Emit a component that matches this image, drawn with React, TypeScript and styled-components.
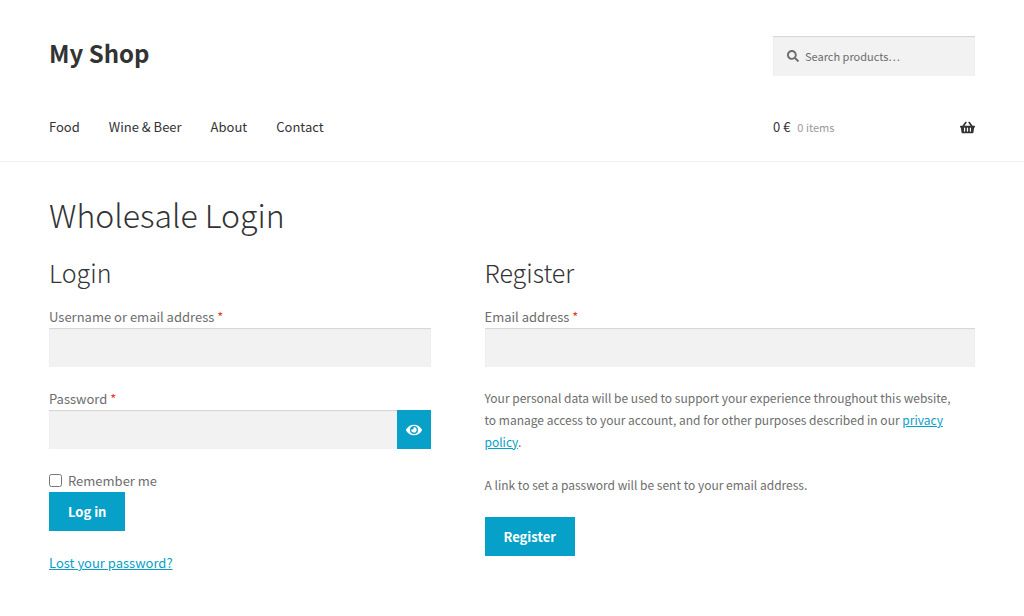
import React, { useState } from "react";
import styled, { createGlobalStyle } from "styled-components";
import { FaEye, FaSearch, FaShoppingBasket } from "react-icons/fa";

const GlobalStyle = createGlobalStyle`
  *, *::before, *::after { box-sizing: border-box; }
  body {
    margin: 0;
    background: #fff;
    color: #6d6d6d;
    font-family: "Noto Sans CJK SC", "Noto Sans", sans-serif;
    font-size: 13px;
    line-height: 23px;
  }
  h1, h2, p { margin: 0; }
  button, input { font: inherit; }
`;

const Header = styled.header`
  padding: 36px 49px 22px;
  border-bottom: 1px solid #f0f0f0;
`;

const HeaderRow = styled.div`
  display: flex;
  align-items: flex-start;
  justify-content: space-between;
`;

const NavRow = styled(HeaderRow)`
  margin-top: 39px;
`;

const SiteTitle = styled.a`
  color: #333;
  font-size: 24px;
  font-weight: 700;
  line-height: 34px;
  text-decoration: none;
`;

const SearchForm = styled.form`
  display: flex;
  align-items: center;
  gap: 6px;
  width: 202px;
  height: 40px;
  padding: 0 14px;
  background: #f2f2f2;
  box-shadow: inset 0 1px 1px rgba(0, 0, 0, 0.125);
  color: #6d6d6d;
`;

const SearchInput = styled.input`
  flex: 1;
  min-width: 0;
  padding: 0;
  border: 0;
  outline: 0;
  background: transparent;
  font-size: 11px;
  &::placeholder { color: #6d6d6d; opacity: 1; }
`;

const Nav = styled.nav`
  display: flex;
  gap: 29px;
`;

const NavLink = styled.a`
  color: #333;
  text-decoration: none;
`;

const Cart = styled.a`
  display: flex;
  align-items: baseline;
  gap: 7px;
  width: 202px;
  color: #333;
  text-decoration: none;
  svg { margin-left: auto; align-self: center; }
`;

const CartCount = styled.span`
  color: #999;
  font-size: 11px;
`;

const Main = styled.main`
  padding: 25px 49px 43px;
`;

const PageTitle = styled.h1`
  color: #333;
  font-size: 32px;
  font-weight: 300;
  line-height: 54px;
`;

const Columns = styled.div`
  display: grid;
  grid-template-columns: 7fr 9fr;
  gap: 54px;
  margin-top: 11px;
`;

const SectionTitle = styled.h2`
  color: #333;
  font-size: 25px;
  font-weight: 300;
  line-height: 40px;
  margin-bottom: 13px;
`;

const Field = styled.div`
  margin-bottom: 20px;
`;

const Label = styled.label`
  display: block;
`;

const Required = styled.span`
  color: #e2401c;
`;

const TextInput = styled.input`
  display: block;
  flex: 1;
  width: 100%;
  min-width: 0;
  height: 39px;
  padding: 0 9px;
  border: 0;
  border-radius: 0;
  background: #f2f2f2;
  box-shadow: inset 0 1px 1px rgba(0, 0, 0, 0.125);
  color: #43454b;
`;

const PasswordBox = styled.div`
  display: flex;
`;

const Button = styled.button`
  display: block;
  height: 39px;
  padding: 0 19px;
  border: 0;
  background: #07a0c8;
  color: #fff;
  font-weight: 700;
  cursor: pointer;
`;

const RevealButton = styled(Button)`
  display: grid;
  place-items: center;
  width: 34px;
  padding: 0;
`;

const RememberLabel = styled.label`
  display: flex;
  align-items: center;
  gap: 6px;
`;

const Checkbox = styled.input`
  width: 13px;
  height: 13px;
  margin: 0;
`;

const Link = styled.a`
  color: #07a0c8;
  text-decoration: underline;
`;

const Note = styled.p`
  margin-bottom: 21px;
  font-size: 12px;
  line-height: 22px;
`;

const LostPassword = styled.p`
  margin-top: 20px;
`;

const menu = ["Food", "Wine & Beer", "About", "Contact"];

export default function App() {
  const [shown, setShown] = useState(false);
  return (
    <>
      <GlobalStyle />
      <Header>
        <HeaderRow>
          <SiteTitle href="#">My Shop</SiteTitle>
          <SearchForm role="search">
            <FaSearch size={12} aria-hidden />
            <SearchInput type="search" aria-label="Search products" placeholder="Search products…" />
          </SearchForm>
        </HeaderRow>
        <NavRow>
          <Nav>
            {menu.map((item) => (
              <NavLink key={item} href="#">{item}</NavLink>
            ))}
          </Nav>
          <Cart href="#">
            <span>0 €</span>
            <CartCount>0 items</CartCount>
            <FaShoppingBasket size={15} aria-hidden />
          </Cart>
        </NavRow>
      </Header>
      <Main>
        <PageTitle>Wholesale Login</PageTitle>
        <Columns>
          <section>
            <SectionTitle>Login</SectionTitle>
            <form>
              <Field>
                <Label htmlFor="username">Username or email address <Required>*</Required></Label>
                <TextInput id="username" type="text" />
              </Field>
              <Field>
                <Label htmlFor="password">Password <Required>*</Required></Label>
                <PasswordBox>
                  <TextInput id="password" type={shown ? "text" : "password"} />
                  <RevealButton type="button" aria-label="Show password" onClick={() => setShown(!shown)}>
                    <FaEye size={16} aria-hidden />
                  </RevealButton>
                </PasswordBox>
              </Field>
              <RememberLabel>
                <Checkbox type="checkbox" />
                Remember me
              </RememberLabel>
              <Button type="submit">Log in</Button>
              <LostPassword><Link href="#">Lost your password?</Link></LostPassword>
            </form>
          </section>
          <section>
            <SectionTitle>Register</SectionTitle>
            <form>
              <Field>
                <Label htmlFor="email">Email address <Required>*</Required></Label>
                <TextInput id="email" type="email" />
              </Field>
              <Note>
                Your personal data will be used to support your experience throughout this website,
                <br />
                to manage access to your account, and for other purposes described in
                our <Link href="#">privacy<br />policy</Link>.
              </Note>
              <Note>A link to set a password will be sent to your email address.</Note>
              <Button type="submit">Register</Button>
            </form>
          </section>
        </Columns>
      </Main>
    </>
  );
}
